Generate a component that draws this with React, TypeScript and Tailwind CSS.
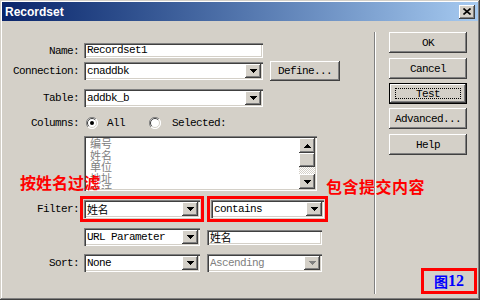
import React from "react";

const sunken =
  "shadow-[inset_1px_1px_0_#808080,inset_2px_2px_0_#404040,inset_-1px_-1px_0_#ffffff,inset_-2px_-2px_0_#d4d0c8]";
const raised =
  "shadow-[inset_-1px_-1px_0_#404040,inset_1px_1px_0_#ffffff,inset_-2px_-2px_0_#808080,inset_2px_2px_0_#d4d0c8]";

const cjk = "font-['Noto_Sans_CJK_SC',sans-serif]";

function Arrow({ dim = false, up = false }: { dim?: boolean; up?: boolean }) {
  const c = dim ? "#808080" : "#000000";
  return (
    <svg width="7" height="4" viewBox="0 0 7 4" className={up ? "rotate-180" : ""}>
      <rect x="0" y="0" width="7" height="1" fill={c} />
      <rect x="1" y="1" width="5" height="1" fill={c} />
      <rect x="2" y="2" width="3" height="1" fill={c} />
      <rect x="3" y="3" width="1" height="1" fill={c} />
    </svg>
  );
}

function Select({
  className,
  text,
  dim = false,
  chinese = false,
}: {
  className: string;
  text: string;
  dim?: boolean;
  chinese?: boolean;
}) {
  return (
    <div className={`flex h-[18px] shrink-0 bg-white p-[2px] ${sunken} ${className}`}>
      <span
        className={`flex-1 pl-[1px] leading-[14px] whitespace-nowrap overflow-hidden ${
          dim ? "text-[#808080]" : "text-black"
        } ${chinese ? `${cjk} text-[11px]` : ""}`}
      >
        {text}
      </span>
      <div className={`flex h-[14px] w-[16px] items-center justify-center bg-[#d4d0c8] ${raised}`}>
        <Arrow dim={dim} />
      </div>
    </div>
  );
}

function Input({ className, text, chinese = false }: { className: string; text: string; chinese?: boolean }) {
  return (
    <div className={`flex h-[15px] shrink-0 items-center bg-white px-[2px] ${sunken} ${className}`}>
      <span className={`pl-[1px] leading-[11px] whitespace-nowrap ${chinese ? `${cjk} text-[11px]` : ""}`}>{text}</span>
    </div>
  );
}

function Label({ text }: { text: string }) {
  return <div className="w-[77px] shrink-0 text-right leading-[12px]">{text}</div>;
}

function Radio({ checked = false }: { checked?: boolean }) {
  return (
    <svg width="12" height="12" viewBox="0 0 12 12" className="shrink-0">
      <circle cx="6" cy="6" r="5.5" fill="#ffffff" />
      <path d="M10 2 A5.5 5.5 0 0 0 2 10" stroke="#808080" strokeWidth="1" fill="none" />
      <path d="M9.2 2.8 A4.5 4.5 0 0 0 2.8 9.2" stroke="#404040" strokeWidth="1" fill="none" />
      <path d="M2 10 A5.5 5.5 0 0 0 10 2" stroke="#ffffff" strokeWidth="1" fill="none" />
      <path d="M2.8 9.2 A4.5 4.5 0 0 0 9.2 2.8" stroke="#d4d0c8" strokeWidth="1" fill="none" />
      {checked && <circle cx="6" cy="6" r="2" fill="#000000" />}
    </svg>
  );
}

function Button({ label, className = "" }: { label: string; className?: string }) {
  return (
    <div
      className={`flex h-[21px] w-[78px] shrink-0 items-center justify-center bg-[#d4d0c8] leading-[12px] ${raised} ${className}`}
    >
      {label}
    </div>
  );
}

export default function App() {
  return (
    <div className="relative h-[300px] w-[480px] overflow-hidden bg-[#d4d0c8] p-[2px] font-['Liberation_Mono',monospace] text-[11px] tracking-[-0.6px] text-black shadow-[inset_-1px_-1px_0_#404040,inset_1px_1px_0_#d4d0c8,inset_-2px_-2px_0_#808080,inset_2px_2px_0_#ffffff]">
      <div className="flex h-full flex-col">
        {/* title bar */}
        <div className="flex h-[19px] shrink-0 items-center bg-gradient-to-r from-[#0a246a] to-[#a6caf0] pl-[3px] pr-[3px]">
          <span className="font-['Liberation_Sans',sans-serif] text-[12px] font-bold tracking-normal text-white">
            Recordset
          </span>
          <div className={`ml-auto flex h-[14px] w-[16px] items-center justify-center bg-[#d4d0c8] ${raised}`}>
            <svg width="8" height="7" viewBox="0 0 8 7">
              <path d="M0.5 0.5 L7.5 6.5 M7.5 0.5 L0.5 6.5" stroke="#000" strokeWidth="1.6" />
            </svg>
          </div>
        </div>

        {/* body */}
        <div className="flex flex-1">
          {/* form */}
          <div className="flex w-[372px] shrink-0 flex-col">
            <div className="mt-[22px] flex h-[15px] items-center">
              <Label text="Name:" />
              <Input className="ml-[5px] w-[179px]" text="Recordset1" />
            </div>
            <div className="mt-[3px] flex h-[20px] items-center">
              <Label text="Connection:" />
              <Select className="ml-[5px] w-[179px]" text="cnaddbk" />
              <div
                className={`ml-[7px] flex h-[20px] w-[70px] items-center justify-center bg-[#d4d0c8] leading-[12px] ${raised}`}
              >
                Define...
              </div>
            </div>
            <div className="mt-[8px] flex h-[18px] items-center">
              <Label text="Table:" />
              <Select className="ml-[5px] w-[179px]" text="addbk_b" />
            </div>
            <div className="mt-[10px] flex h-[12px] items-center">
              <Label text="Columns:" />
              <div className="ml-[7px] flex items-center">
                <Radio checked />
              </div>
              <span className="ml-[9px] leading-[12px]">All</span>
              <div className="ml-[24px] flex items-center">
                <Radio />
              </div>
              <span className="ml-[11px] leading-[12px]">Selected:</span>
            </div>
            <div className="mt-[7px] flex h-[55px]">
              <div className="w-[77px] shrink-0" />
              <div className={`ml-[5px] flex w-[233px] overflow-hidden bg-white p-[2px] ${sunken}`}>
                <div
                  className={`flex-1 overflow-hidden pl-[4px] ${cjk} text-[11px] leading-[11.5px] tracking-normal text-[#808080]`}
                >
                  <div>编号</div>
                  <div>姓名</div>
                  <div>单位</div>
                  <div>地址</div>
                  <div>电话</div>
                </div>
                <div className="flex w-[16px] flex-col">
                  <div className={`flex h-[15px] items-center justify-center bg-[#d4d0c8] ${raised}`}>
                    <Arrow up />
                  </div>
                  <div className={`h-[14px] bg-[#d4d0c8] ${raised}`} />
                  <div className="flex-1 bg-[repeating-conic-gradient(#ffffff_0_25%,#d4d0c8_0_50%)] bg-[length:2px_2px]" />
                  <div className={`flex h-[15px] items-center justify-center bg-[#d4d0c8] ${raised}`}>
                    <Arrow />
                  </div>
                </div>
              </div>
            </div>
            <div className="mt-[5px] flex h-[26px] items-center">
              <Label text="Filter:" />
              <div className="ml-[1px] border-[3px] border-[#ff0000] p-[1px]">
                <Select className="w-[116px]" text="姓名" chinese />
              </div>
              <div className="ml-[3px] border-[3px] border-[#ff0000] p-[1px]">
                <Select className="w-[113px]" text="contains" />
              </div>
            </div>
            <div className="mt-[6px] flex h-[18px] items-center">
              <div className="w-[77px] shrink-0" />
              <Select className="ml-[5px] w-[116px]" text="URL Parameter" />
              <Input className="ml-[7px] w-[115px]" text="姓名" chinese />
            </div>
            <div className="mt-[8px] flex h-[18px] items-center">
              <Label text="Sort:" />
              <Select className="ml-[5px] w-[116px]" text="None" />
              <Select className="ml-[7px] w-[115px]" text="Ascending" dim />
            </div>
          </div>

          {/* separator */}
          <div className="mb-[4px] mt-[11px] w-[2px] shrink-0 border-l border-r border-l-[#808080] border-r-white" />

          {/* buttons */}
          <div className="flex flex-1 flex-col">
            <div className="flex flex-col pl-[13px]">
              <Button label="OK" className="mt-[11px]" />
              <Button label="Cancel" className="mt-[5px]" />
              <div className="mt-[4px] h-[21px] w-[78px] bg-black p-[1px]">
                <div
                  className={`flex h-full w-full items-center justify-center bg-[#d4d0c8] leading-[12px] ${raised}`}
                >
                  <div className="flex h-[11px] w-[66px] items-center justify-center border border-dotted border-black">
                    Test
                  </div>
                </div>
              </div>
              <Button label="Advanced..." className="mt-[4px]" />
              <Button label="Help" className="mt-[5px]" />
            </div>
            <div className="mb-[4px] mr-[1px] mt-auto ml-auto flex h-[26px] w-[56px] items-center justify-center border-[3px] border-[#ff0000] font-bold tracking-normal text-[#0000ff]">
              <span className={`${cjk} text-[14px] leading-[16px]`}>图</span>
              <span className="font-['Liberation_Serif',serif] text-[16px] leading-[16px]">12</span>
            </div>
          </div>
        </div>
      </div>

      {/* annotations */}
      <div
        className={`absolute left-[20px] top-[174px] ${cjk} text-[16px] font-bold leading-[16px] tracking-normal text-[#ff0000]`}
      >
        按姓名过滤
      </div>
      <div
        className={`absolute left-[326px] top-[178px] ${cjk} text-[16px] font-bold leading-[16px] tracking-[0.5px] text-[#ff0000]`}
      >
        包含提交内容
      </div>
    </div>
  );
}
